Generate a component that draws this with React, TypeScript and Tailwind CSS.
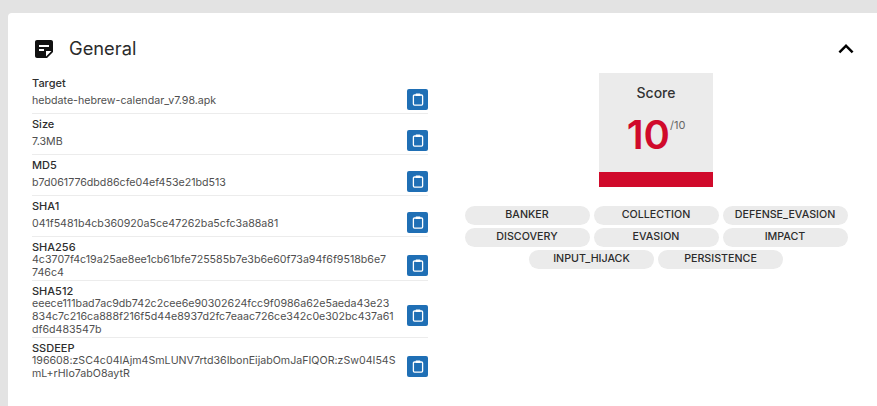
import { MdStickyNote2, MdExpandLess } from 'react-icons/md';

const rows = [
  { label: 'Target', value: 'hebdate-hebrew-calendar_v7.98.apk' },
  { label: 'Size', value: '7.3MB' },
  { label: 'MD5', value: 'b7d061776dbd86cfe04ef453e21bd513' },
  { label: 'SHA1', value: '041f5481b4cb360920a5ce47262ba5cfc3a88a81' },
  { label: 'SHA256', value: '4c3707f4c19a25ae8ee1cb61bfe725585b7e3b6e60f73a94f6f9518b6e7\n746c4' },
  { label: 'SHA512', value: 'eeece111bad7ac9db742c2cee6e90302624fcc9f0986a62e5aeda43e23\n834c7c216ca888f216f5d44e8937d2fc7eaac726ce342c0e302bc437a61\ndf6d483547b' },
  { label: 'SSDEEP', value: '196608:zSC4c04IAjm4SmLUNV7rtd36IbonEijabOmJaFIQOR:zSw04I54S\nmL+rHIo7abO8aytR' },
];

const tags = ['BANKER', 'COLLECTION', 'DEFENSE_EVASION', 'DISCOVERY', 'EVASION', 'IMPACT', 'INPUT_HIJACK', 'PERSISTENCE'];

function ClipboardIcon() {
  return (
    <svg width="12" height="13" viewBox="0 0 12 13" fill="none" stroke="white" strokeWidth="1.3">
      <rect x="1.4" y="2" width="9.2" height="10.2" rx="1.1" />
      <rect x="3.6" y="0.4" width="4.8" height="2.6" rx="0.6" fill="white" stroke="none" />
    </svg>
  );
}

export default function App() {
  return (
    <div className="h-[406px] overflow-hidden bg-[#e3e3e3] pl-2 pt-[13px]" style={{ fontFamily: 'Inter, sans-serif' }}>
      <div className="h-[420px] rounded-tl-[4px] bg-white pl-6 pr-4">
        {/* Header */}
        <div className="flex h-[60px] items-center pt-3">
          <MdStickyNote2 className="text-[24px] text-[#111]" />
          <h2 className="ml-[13px] text-[18.3px] text-[#2b2b2b]">General</h2>
          <MdExpandLess className="ml-auto text-[30px] text-black" />
        </div>

        <div className="flex">
          {/* Details */}
          <div className="w-[396px] shrink-0">
            {rows.map((row, i) => (
              <div key={row.label} className={i < rows.length - 1 ? 'border-b border-[#ececec] pb-px pt-1' : 'pb-px pt-1'}>
                <p className="-mb-px text-[11px] font-medium leading-[13px] text-[#2e2e2e]">{row.label}</p>
                <div className="flex items-center justify-between">
                  <p className="w-[370px] text-[10.65px] leading-[13px] whitespace-pre-line text-[#4f4f4f]">{row.value}</p>
                  <button className="mb-[2px] flex h-[21px] w-[21px] shrink-0 items-center justify-center rounded-[2px] bg-[#1f6fb5]">
                    <ClipboardIcon />
                  </button>
                </div>
              </div>
            ))}
          </div>

          {/* Score */}
          <div className="ml-9 flex w-[384px] shrink-0 flex-col items-center">
            <div className="flex h-[114px] w-[114px] flex-col bg-[#ebebeb]">
              <p className="mt-[11px] text-center text-[14px] leading-[17px] font-medium text-[#333]">Score</p>
              <div className="mt-[10px] flex justify-center">
                <span className="text-[40px] leading-[48px] font-semibold text-[#d00a2b]">10</span>
                <span className="mt-[8px] text-[11px] leading-[13px] text-[#666]">/10</span>
              </div>
              <div className="mt-auto h-[15px] bg-[#d00a2b]" />
            </div>
            <div className="mt-[19px] flex flex-wrap justify-center gap-x-1 gap-y-[3px]">
              {tags.map((tag) => (
                <span key={tag} className="flex h-[19px] w-[125px] items-center justify-center rounded-full bg-[#ebebeb] text-[10.7px] font-medium text-[#2b2b2b]">
                  {tag}
                </span>
              ))}
            </div>
          </div>
        </div>
      </div>
    </div>
  );
}
